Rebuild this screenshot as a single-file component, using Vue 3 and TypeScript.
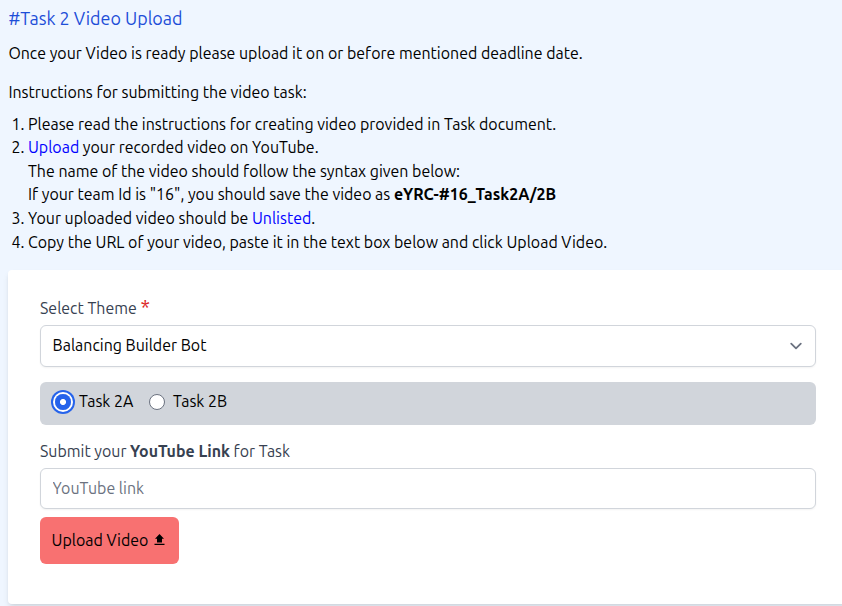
<script setup lang="ts">
import { ref } from 'vue'

const theme = ref('Balancing Builder Bot')
const task = ref<'2A' | '2B'>('2A')
const link = ref('')
</script>

<template>
  <main class="page">
    <h1>#Task 2 Video Upload</h1>
    <p class="lead">Once your Video is ready please upload it on or before mentioned deadline date.</p>
    <p class="intro">Instructions for submitting the video task:</p>
    <ol>
      <li>Please read the instructions for creating video provided in Task document.</li>
      <li>
        <a href="#">Upload</a> your recorded video on YouTube.<br>
        The name of the video should follow the syntax given below:<br>
        If your team Id is "16", you should save the video as <strong>eYRC-#16_Task2A/2B</strong>
      </li>
      <li>Your uploaded video should be <a href="#">Unlisted</a>.</li>
      <li>Copy the URL of your video, paste it in the text box below and click Upload Video.</li>
    </ol>
    <form class="card" @submit.prevent>
      <label class="label" for="theme">Select Theme <span class="star">*</span></label>
      <div class="select">
        <select id="theme" v-model="theme" class="field">
          <option>Balancing Builder Bot</option>
        </select>
        <svg class="chevron" viewBox="0 0 20 20" fill="none">
          <path d="M6 8l4 4 4-4" stroke="#6b7280" stroke-width="1.5" stroke-linecap="round" stroke-linejoin="round" />
        </svg>
      </div>
      <div class="radios">
        <label class="option first">
          <input v-model="task" type="radio" name="task" value="2A" :class="{ focused: task === '2A' }">Task 2A
        </label>
        <label class="option second">
          <input v-model="task" type="radio" name="task" value="2B" :class="{ focused: task === '2B' }">Task 2B
        </label>
      </div>
      <label class="label link" for="link">Submit your <strong>YouTube Link</strong> for Task</label>
      <input id="link" v-model="link" class="field" type="text" placeholder="YouTube link">
      <button class="upload" type="submit">
        Upload Video
        <svg viewBox="0 0 11 12"><path d="M5.5 0L10 4.8H8V8.4H3V4.8H1ZM0.5 9.8H10.5V11.1H0.5Z" fill="currentColor" /></svg>
      </button>
    </form>
  </main>
</template>

<style>
body {
  background: #eff6ff;
  overflow: hidden;
}
</style>

<style scoped>
.page {
  box-sizing: border-box;
  height: 606px;
  padding: 4px 0 0 8.4px;
  font: 15.95px/24px "Ubuntu", "Noto Sans", sans-serif;
  color: #000;
  overflow: hidden;
}
.page * {
  box-sizing: border-box;
}
h1 {
  margin: 0;
  font-size: 17.92px;
  line-height: 28px;
  font-weight: 400;
  color: #1d4ed8;
}
p {
  margin: 0;
}
.lead {
  padding-top: 9px;
}
.intro {
  padding-top: 15px;
}
ol {
  margin: 8.7px 0 0;
  padding: 0 0 0 19.6px;
  line-height: 23.6px;
}
strong {
  font-weight: 700;
}
a {
  color: #00f;
  text-decoration: none;
}
.card {
  width: 840px;
  height: 334px;
  margin: 15.7px 0 0 -0.4px;
  padding: 26px 32px 0;
  display: flex;
  flex-direction: column;
  background: #fff;
  border-radius: 4px;
  box-shadow: 0 4px 6px -1px rgb(0 0 0 / 0.1), 0 2px 4px -2px rgb(0 0 0 / 0.1);
}
.label {
  height: 24px;
  color: #374151;
}
.star {
  color: #dc2626;
  font-size: 20px;
  line-height: 20px;
}
.select {
  display: grid;
  align-items: center;
  margin-top: 5px;
  width: 776px;
}
.select > * {
  grid-area: 1 / 1;
}
.chevron {
  width: 24px;
  height: 24px;
  justify-self: end;
  margin-right: 8px;
  pointer-events: none;
}
.field {
  width: 776px;
  height: 41px;
  margin: 0;
  padding: 0 11.6px;
  font: inherit;
  color: #000;
  background: #fff;
  border: 1px solid #d1d5db;
  border-radius: 6px;
  box-shadow: 0 1px 2px rgb(0 0 0 / 0.05);
  appearance: none;
  outline: none;
}
.select .field {
  height: 42px;
  padding-bottom: 2px;
}
.field::placeholder {
  color: #6b7280;
}
.radios {
  display: flex;
  width: 776px;
  height: 43px;
  margin-top: 15px;
  padding: 0 15px 4px;
  align-items: center;
  background: #d1d5db;
  border-radius: 6px;
}
.option {
  display: flex;
  align-items: center;
}
.option input {
  position: relative;
  top: 0.5px;
  appearance: none;
  width: 16px;
  height: 16px;
  margin: 0;
  border: 1px solid #6b7280;
  border-radius: 50%;
  background: #fff;
}
.option input:checked {
  border-color: transparent;
  background: radial-gradient(circle, #fff 0 2.7px, #2563eb 3.3px) border-box;
}
.option input.focused {
  box-shadow: 0 0 0 2px #fff, 0 0 0 4px #2563eb;
}
.first {
  gap: 8px;
}
.second {
  gap: 8.4px;
  margin-left: 15.2px;
}
.link {
  margin-top: 14px;
  margin-bottom: 5px;
}
.upload {
  display: flex;
  align-items: center;
  align-self: flex-start;
  width: 139px;
  height: 47px;
  margin: 8px 0 0;
  padding: 0 11.6px;
  gap: 6px;
  font: inherit;
  color: #000;
  white-space: nowrap;
  background: #f87171;
  border: 0;
  border-radius: 6px;
}
.upload svg {
  flex: none;
  width: 11px;
  height: 12px;
}
</style>
